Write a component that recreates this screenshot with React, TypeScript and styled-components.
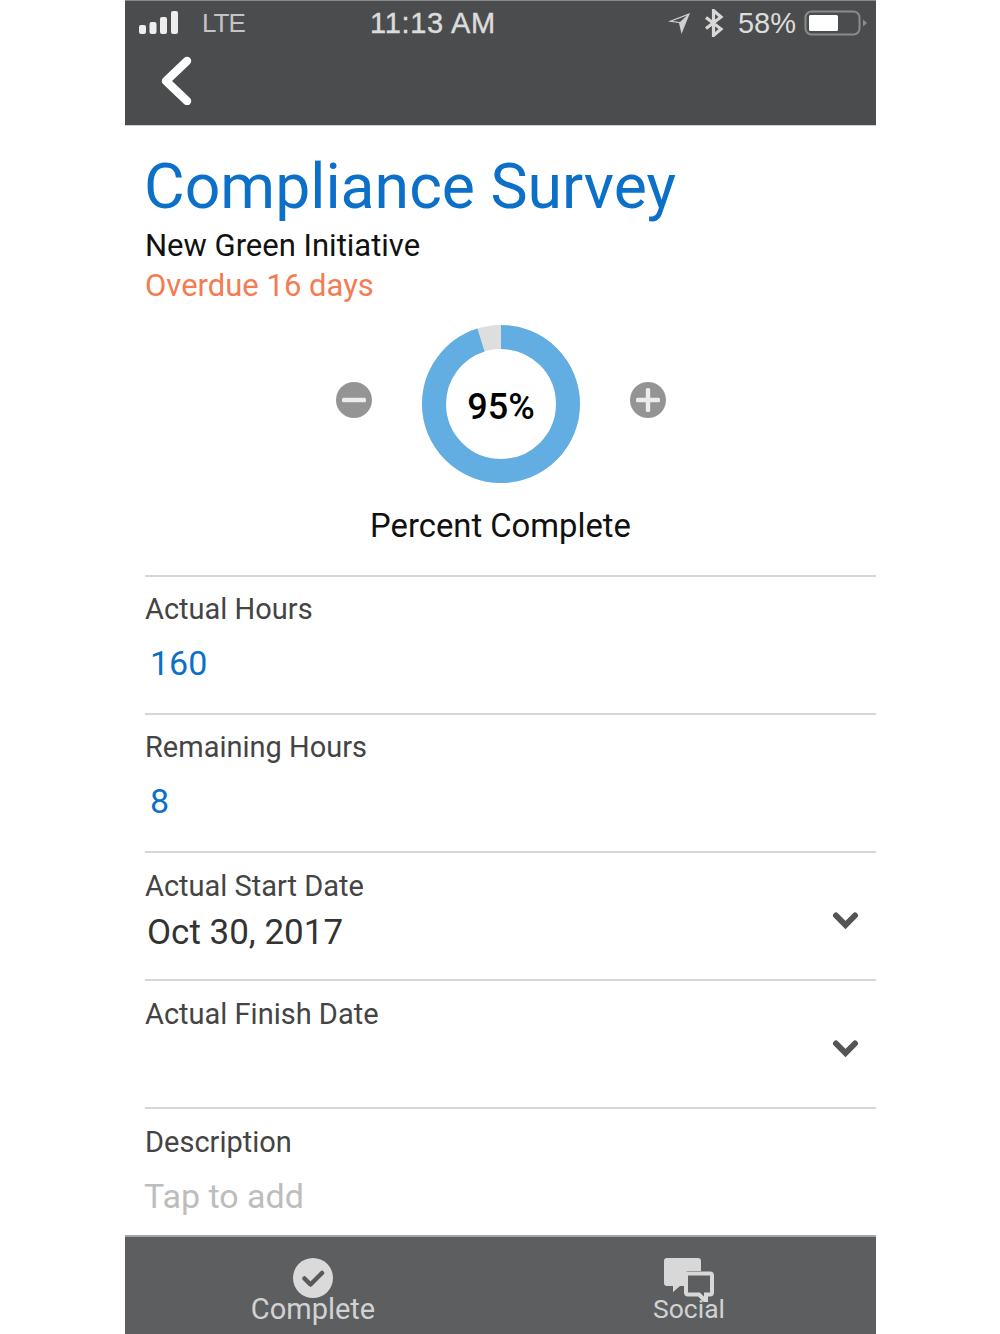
import React from "react";
import styled, { createGlobalStyle } from "styled-components";

const Global = createGlobalStyle`
  html, body { margin: 0; padding: 0; background: #fff; }
  body { font-family: Roboto, "Liberation Sans", sans-serif; }
`;

const Page = styled.div`
  width: 1000px;
  height: 1334px;
  overflow: hidden;
  padding-left: 125px;
  box-sizing: border-box;
`;
const Phone = styled.main`
  width: 751px;
  height: 1334px;
  display: flex;
  flex-direction: column;
  background: #fff;
`;
const Header = styled.header`
  height: 126px;
  flex: none;
  background: #4b4c4e;
  border-top: 1px solid #8a8a8b;
  border-bottom: 1px solid #d0d0d0;
  box-sizing: border-box;
  display: flex;
  flex-direction: column;
`;
const StatusBar = styled.div`
  height: 44px;
  display: grid;
  grid-template-columns: 245px 240px 1fr;
  align-items: center;
  color: #dcdcdc;
  font-family: "Liberation Sans", sans-serif;
  font-size: 29px;
`;
const StatusLeft = styled.div`
  display: flex;
  align-items: center;
  gap: 21px;
  padding-left: 14px;
`;
const Lte = styled.span`
  font-size: 26px;
  color: #c4c4c4;
  letter-spacing: -1px;
`;
const Clock = styled.span`
  font-size: 29px;
  -webkit-text-stroke: 0.4px #dcdcdc;
  letter-spacing: 0.7px;
`;
const StatusRight = styled.div`
  display: flex;
  align-items: center;
  justify-content: flex-end;
  gap: 8px;
  padding-right: 8px;
`;
const Percent = styled.span`
  margin-left: 5px;
`;
const BluetoothIcon = styled.svg`
  margin-left: 4px;
`;
const Back = styled.div`
  padding: 10px 0 0 34px;
  line-height: 0;
`;
const Content = styled.div`
  flex: 1;
  padding-left: 20px;
  display: flex;
  flex-direction: column;
  min-height: 0;
`;
const Title = styled.h1`
  margin: 25px 0 0 -1px;
  height: 72px;
  font-size: 62.5px;
  line-height: 72px;
  font-weight: 400;
  color: #0c70c8;
  white-space: nowrap;
`;
const Subtitle = styled.div`
  margin-top: 3px;
  font-size: 31px;
  line-height: 40px;
  color: #111;
`;
const Overdue = styled.div`
  font-size: 31px;
  line-height: 40px;
  color: #f47c53;
`;
const Gauge = styled.section`
  margin-left: -20px;
  height: 160px;
  margin-top: 19px;
  display: grid;
  grid-template-columns: 211px 36px 1fr 36px 210px;
  align-items: center;
`;
const StepButton = styled.div`
  margin-top: -8px;
  line-height: 0;
`;
const Donut = styled.div`
  position: relative;
  width: 158px;
  height: 158px;
  justify-self: center;
`;
const DonutLabel = styled.span`
  position: absolute;
  inset: 5px 0 0;
  display: flex;
  align-items: center;
  justify-content: center;
  font-size: 36px;
  font-weight: 500;
  color: #000;
`;
const Caption = styled.div`
  margin: 21px 0 0 -20px;
  text-align: center;
  font-size: 32.8px;
  line-height: 44px;
  color: #111;
`;
const Row = styled.section<{ $h: number; $first?: boolean; $pad: number }>`
  position: relative;
  height: ${(p) => p.$h}px;
  margin-top: ${(p) => (p.$first ? 27 : 0)}px;
  box-sizing: border-box;
  border-top: 2px solid #d6d6d6;
  padding-top: ${(p) => p.$pad}px;
  flex: none;
`;
const Label = styled.div`
  font-size: 29px;
  line-height: 36px;
  color: #444;
`;
const BlueValue = styled.div`
  margin: 14px 0 0 5px;
  font-size: 34px;
  line-height: 44px;
  color: #0c70c8;
`;
const DateValue = styled.div`
  margin: 6px 0 0 2px;
  font-size: 35px;
  line-height: 46px;
  color: #333;
`;
const Placeholder = styled.div`
  margin: 14px 0 0 -1px;
  font-size: 34px;
  line-height: 44px;
  color: #bdbdbd;
`;
const Chevron = styled.div`
  position: absolute;
  right: 17px;
  top: 59px;
  line-height: 0;
`;
const Footer = styled.footer`
  height: 99px;
  flex: none;
  background: #5d5e60;
  border-top: 2px solid #a5a5a5;
  box-sizing: border-box;
  display: grid;
  grid-template-columns: 376px 1fr;
`;
const Tab = styled.div`
  display: flex;
  flex-direction: column;
  align-items: center;
  padding-top: 21px;
  color: #d2d2d2;
  font-size: 29px;
  line-height: 32px;
`;
const TabIcon = styled.div`
  height: 40px;
  line-height: 0;
  margin-bottom: -5px;
`;
const SocialTab = styled(Tab)`
  margin-left: 1px;
  font-size: 26.5px;
`;
const SocialLabel = styled.span`
  width: 250px;
  text-align: center;
`;

const Circle = ({ plus }: { plus?: boolean }) => (
  <svg width="36" height="36" viewBox="0 0 36 36">
    <circle cx="18" cy="18" r="18" fill="#949494" />
    <rect x="6" y="15.8" width="24" height="4.4" rx="1.5" fill="#ececec" />
    {plus && <rect x="15.8" y="6" width="4.4" height="24" rx="1.5" fill="#ececec" />}
  </svg>
);

const Down = () => (
  <svg width="28" height="18" viewBox="0 0 28 18">
    <path d="M5 3.500 14.500 13 24 3.500" fill="none" stroke="#545456" strokeWidth="6" strokeLinecap="round" strokeLinejoin="miter" />
  </svg>
);

export default function App() {
  const r = 67;
  const c = 2 * Math.PI * r;
  return (
    <Page>
      <Global />
      <Phone>
        <Header>
          <StatusBar>
            <StatusLeft>
              <svg width="42" height="26" viewBox="0 0 42 26">
                <rect x="0" y="15" width="7" height="9" rx="2" fill="#eee" />
                <rect x="10.5" y="12" width="7" height="12" rx="2" fill="#eee" />
                <rect x="21" y="7" width="7" height="17" rx="2" fill="#eee" />
                <rect x="32" y="1" width="7" height="23" rx="2" fill="#eee" />
              </svg>
              <Lte>LTE</Lte>
            </StatusLeft>
            <Clock>11:13 AM</Clock>
            <StatusRight>
              <svg width="24" height="24" viewBox="0 0 24 24">
                <path d="M23 2 1 10.5l11 1.5 2.5 11z" fill="#d0d0d0" />
                <path d="M20 4.5 5.5 10l7.5 1z" fill="#4b4c4e" />
              </svg>
              <BluetoothIcon width="22" height="28" viewBox="0 0 22 28">
                <path d="M3 8.5 18 20l-7.5 6.500V1.500L18 8 3 19.500" fill="none" stroke="#d8d8d8" strokeWidth="3.200" />
              </BluetoothIcon>
              <Percent>58%</Percent>
              <svg width="64" height="28" viewBox="0 0 64 28">
                <rect x="1.500" y="2.500" width="54" height="23" rx="6" fill="none" stroke="#8b8b8c" strokeWidth="2" />
                <rect x="5" y="6" width="29" height="16" rx="1.500" fill="#fff" />
                <path d="M59 10.500 63 14l-4 3.500z" fill="#8b8b8c" />
              </svg>
            </StatusRight>
          </StatusBar>
          <Back>
            <svg width="34" height="50" viewBox="0 0 34 50">
              <path d="M28 6 7 26l21 20" fill="none" stroke="#fff" strokeWidth="8.500" strokeLinecap="round" strokeLinejoin="round" />
            </svg>
          </Back>
        </Header>
        <Content>
          <Title>Compliance Survey</Title>
          <Subtitle>New Green Initiative</Subtitle>
          <Overdue>Overdue 16 days</Overdue>
          <Gauge>
            <StepButton />
            <StepButton>
              <Circle />
            </StepButton>
            <Donut>
              <svg width="158" height="158" viewBox="0 0 158 158">
                <circle cx="79" cy="79" r={r} fill="none" stroke="#dedede" strokeWidth="24" />
                <circle
                  cx="79"
                  cy="79"
                  r={r}
                  fill="none"
                  stroke="#62aee2"
                  strokeWidth="24"
                  strokeDasharray={`${c * 0.95} ${c}`}
                  transform="rotate(-90 79 79)"
                />
              </svg>
              <DonutLabel>95%</DonutLabel>
            </Donut>
            <StepButton>
              <Circle plus />
            </StepButton>
            <StepButton />
          </Gauge>
          <Caption>Percent Complete</Caption>
          <Row $h={138} $pad={14} $first>
            <Label>Actual Hours</Label>
            <BlueValue>160</BlueValue>
          </Row>
          <Row $h={138} $pad={14}>
            <Label>Remaining Hours</Label>
            <BlueValue>8</BlueValue>
          </Row>
          <Row $h={128} $pad={15}>
            <Label>Actual Start Date</Label>
            <DateValue>Oct 30, 2017</DateValue>
            <Chevron>
              <Down />
            </Chevron>
          </Row>
          <Row $h={128} $pad={15}>
            <Label>Actual Finish Date</Label>
            <Chevron>
              <Down />
            </Chevron>
          </Row>
          <Row $h={128} $pad={15}>
            <Label>Description</Label>
            <Placeholder>Tap to add</Placeholder>
          </Row>
        </Content>
        <Footer>
          <Tab>
            <TabIcon>
              <svg width="40" height="40" viewBox="0 0 40 40">
                <circle cx="20" cy="20" r="20" fill="#dadada" />
                <path d="M11.500 20.500 17.500 26.500 29 15" fill="none" stroke="#58595b" strokeWidth="4.500" strokeLinecap="round" strokeLinejoin="round" />
              </svg>
            </TabIcon>
            <span>Complete</span>
          </Tab>
          <SocialTab>
            <TabIcon>
              <svg width="50" height="44" viewBox="0 0 50 44">
                <path d="M3 0h31a3 3 0 0 1 3 3v10H25a4 4 0 0 0-4 4v11h-5l-7 6v-6H3a3 3 0 0 1-3-3V3a3 3 0 0 1 3-3z" fill="#d8d8d8" />
                <path d="M24 15.500h22a2 2 0 0 1 2 2v17a2 2 0 0 1-2 2h-4v7l-7-7H24a2 2 0 0 1-2-2v-17a2 2 0 0 1 2-2z" fill="none" stroke="#d8d8d8" strokeWidth="4" />
              </svg>
            </TabIcon>
            <SocialLabel>Social</SocialLabel>
          </SocialTab>
        </Footer>
      </Phone>
    </Page>
  );
}
